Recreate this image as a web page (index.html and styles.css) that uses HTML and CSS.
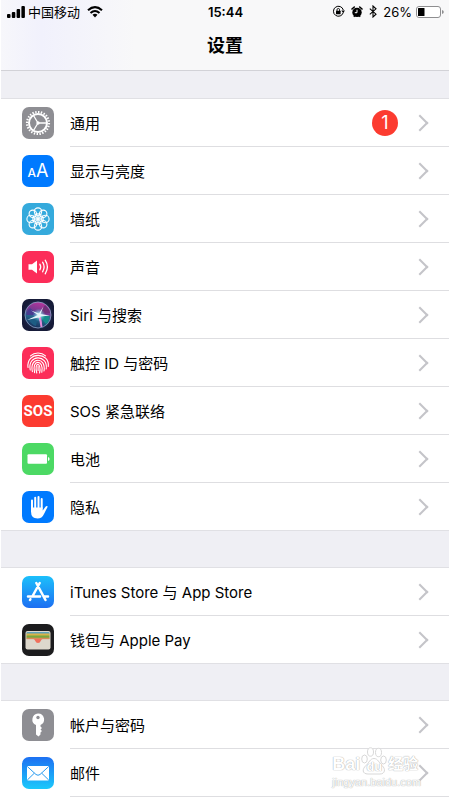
FILE: index.html
```html
<!DOCTYPE html>
<html lang="zh-CN">
<head>
  <meta charset="UTF-8">
  <meta name="viewport" content="width=device-width, initial-scale=1.0">
  <title>设置</title>
  <link rel="stylesheet" href="styles.css">
</head>
<body>
  <header class="top-bar">
    <!-- Status bar -->
    <div class="status-bar">
      <div class="status-left">
        <svg class="signal" width="18" height="12" viewBox="0 0 18 12">
          <rect x="0" y="8" width="3.500" height="4" rx="1"/>
          <rect x="4.800" y="6" width="3.500" height="6" rx="1"/>
          <rect x="9.600" y="3" width="3.500" height="9" rx="1"/>
          <rect x="14.400" y="0" width="3.500" height="12" rx="1"/>
        </svg>
        <span class="carrier">中国移动</span>
        <svg width="16" height="12" viewBox="0 0 16 12">
          <path d="M1 4.300Q8 -2 15 4.300M3.500 7Q8 3 12.500 7" fill="none" stroke="#000" stroke-width="2.100"/>
          <path d="M5.500 8.800Q8 6.800 10.500 8.800L8 11.500Z"/>
        </svg>
      </div>
      <span class="time">15:44</span>
      <div class="status-right">
        <svg width="13" height="13" viewBox="0 0 13 13">
          <path d="M11.300 7.500A5 5 0 1 1 11.300 5" fill="none" stroke="#000" stroke-width="1"/>
          <path d="M9.300 5.500h3.700l-1.800 2.600z"/>
          <rect x="4" y="5.700" width="4.600" height="3.500" rx=".5"/>
          <path d="M5 6V4.800a1.300 1.300 0 0 1 2.600 0V6" fill="none" stroke="#000" stroke-width=".9"/>
        </svg>
        <svg width="12" height="12" viewBox="0 0 12 12">
          <circle cx="6" cy="6.400" r="4.700"/>
          <path d="M1 3L3.300 1M8.700 1L11 3" stroke="#000" stroke-width="1.600" stroke-linecap="round"/>
          <path d="M2.800 10.800L4 9.500M9.200 10.800L8 9.500" stroke="#000" stroke-width="1.300"/>
          <path d="M6 3.700V6.700H3.800" fill="none" stroke="#fff" stroke-width="1"/>
        </svg>
        <svg width="8" height="13" viewBox="0 0 8 13">
          <path d="M.8 3.700L7 9.200L4 12V1L7 3.800L.8 9.300" fill="none" stroke="#000" stroke-width="1.100"/>
        </svg>
        <span class="percent">26%</span>
        <svg class="charge" width="28" height="12" viewBox="0 0 28 12">
          <rect x=".5" y=".5" width="24" height="11" rx="2.500" fill="#fff" stroke="#8e8e90"/>
          <rect x="2" y="2" width="6.500" height="8" rx=".5"/>
          <path d="M26 4q1.800 .5 1.800 2t-1.800 2z" fill="#8e8e90"/>
        </svg>
      </div>
    </div>
    <h1>设置</h1>
  </header>

  <main class="settings">
    <ul class="group">
      <li><a class="row" href="#general">
        <svg class="icon gray" viewBox="0 0 32 32">
          <g fill="none" stroke="#fff">
            <circle cx="16" cy="16" r="11" stroke-width="2.200" pathLength="48" stroke-dasharray="1 1"/>
            <circle cx="16" cy="16" r="9" stroke-width="2"/>
            <path d="M16 16H24.500M16 16L11.500 8.500M16 16L11.500 23.500" stroke-width="1.300"/>
          </g>
          <circle cx="16" cy="16" r="1.700" fill="#fff"/>
        </svg>
        <span class="cell"><span class="label">通用</span><span class="badge">1</span></span>
      </a></li>
      <li><a class="row" href="#display">
        <span class="icon blue letters"><small>A</small>A</span>
        <span class="cell"><span class="label">显示与亮度</span></span>
      </a></li>
      <li><a class="row" href="#wallpaper">
        <svg class="icon cyan" viewBox="0 0 32 32">
          <g fill="none" stroke="#fff" stroke-width="1.100">
            <circle cx="16" cy="8.600" r="3.700"/><circle cx="21.200" cy="10.800" r="3.700"/>
            <circle cx="23.400" cy="16" r="3.700"/><circle cx="21.200" cy="21.200" r="3.700"/>
            <circle cx="16" cy="23.400" r="3.700"/><circle cx="10.800" cy="21.200" r="3.700"/>
            <circle cx="8.600" cy="16" r="3.700"/><circle cx="10.800" cy="10.800" r="3.700"/>
          </g>
          <g fill="none" stroke="#fff" stroke-width=".8">
            <circle cx="16" cy="13" r="2.500"/><circle cx="18.100" cy="13.900" r="2.500"/>
            <circle cx="19" cy="16" r="2.500"/><circle cx="18.100" cy="18.100" r="2.500"/>
            <circle cx="16" cy="19" r="2.500"/><circle cx="13.900" cy="18.100" r="2.500"/>
            <circle cx="13" cy="16" r="2.500"/><circle cx="13.900" cy="13.900" r="2.500"/>
          </g>
        </svg>
        <span class="cell"><span class="label">墙纸</span></span>
      </a></li>
      <li><a class="row" href="#sounds">
        <svg class="icon pink" viewBox="0 0 32 32">
          <path d="M6.500 13.200H10L15 9.500V22.500L10 18.800H6.500Z" fill="#fff"/>
          <g fill="none" stroke="#fff" stroke-width="1.300" stroke-linecap="round">
            <path d="M17.800 13.200Q19.600 16 17.800 18.800M20.600 11.200Q23.600 16 20.600 20.800M23.200 9.200Q27.600 16 23.200 22.800"/>
          </g>
        </svg>
        <span class="cell"><span class="label">声音</span></span>
      </a></li>
      <li><a class="row" href="#siri">
        <svg class="icon" viewBox="0 0 32 32">
          <defs>
            <radialGradient id="siri-bg"><stop offset="0" stop-color="#344c87"/><stop offset="1" stop-color="#161b38"/></radialGradient>
            <linearGradient id="siri-orb" x1=".6" y1="0" x2=".3" y2="1"><stop offset="0" stop-color="#b9359c"/><stop offset=".4" stop-color="#6d3a8f"/><stop offset=".6" stop-color="#26688f"/><stop offset="1" stop-color="#172a56"/></linearGradient>
            <radialGradient id="siri-glow"><stop offset="0" stop-color="#fff"/><stop offset=".4" stop-color="#9de8ef" stop-opacity=".7"/><stop offset="1" stop-color="#4bb8dc" stop-opacity="0"/></radialGradient>
          </defs>
          <rect width="32" height="32" fill="url(#siri-bg)"/>
          <circle cx="16" cy="16" r="13" fill="url(#siri-orb)" stroke="#8fa5c8" stroke-width=".8"/>
          <path d="M16 16L8 9Q5 12 4 16Z" fill="#493b91"/>
          <path d="M16 16L28 17Q27 23 24 25Z" fill="#168b8b"/>
          <path d="M17 15L23 6Q28 11 28 14Z" fill="#703078"/>
          <path d="M16 16L7 21Q10 26 14 27Z" fill="#1d5c83"/>
          <circle cx="17" cy="16" r="6.500" fill="url(#siri-glow)"/>
          <path d="M16 16L9 11.500L17 14.500L21.500 7.500L18.500 15L28 16.500L18.500 17.500L20 28L16.500 18.500L5 21Z" fill="#e4f5fb"/>
          <path d="M17 19L18.500 28L20.500 28L19 18Z" fill="#e48bd8"/>
        </svg>
        <span class="cell"><span class="label">Siri 与搜索</span></span>
      </a></li>
      <li><a class="row" href="#touch-id">
        <svg class="icon pink" viewBox="0 0 32 32">
          <g fill="none" stroke="#fff" stroke-width="1.100" stroke-linecap="round">
            <path d="M8.500 8.800Q11.500 6 16 6T23.500 8.800"/>
            <path d="M6 20.500C4 4.500 28 4.500 26.300 19.500"/>
            <path d="M8.200 23C5 7 26.500 7 24.200 22"/>
            <path d="M10.400 24.600C7 9.500 24.500 9.500 22 24"/>
            <path d="M12.600 25.600C9 12 22.500 12 19.800 25.300"/>
            <path d="M14.800 26C11.500 14.500 20 14.500 17.600 26"/>
            <path d="M16.100 19.500V23.500"/>
          </g>
        </svg>
        <span class="cell"><span class="label">触控 ID 与密码</span></span>
      </a></li>
      <li><a class="row" href="#sos">
        <span class="icon red sos">SOS</span>
        <span class="cell"><span class="label">SOS 紧急联络</span></span>
      </a></li>
      <li><a class="row" href="#battery">
        <svg class="icon green" viewBox="0 0 32 32">
          <rect x="5.500" y="11.300" width="19.500" height="9.400" rx="1" fill="#fff"/>
          <path d="M26 14q1.600 .5 1.600 2t-1.600 2z" fill="#fff"/>
        </svg>
        <span class="cell"><span class="label">电池</span></span>
      </a></li>
      <li><a class="row" href="#privacy">
        <svg class="icon blue" viewBox="0 0 32 32">
          <g stroke="#fff" stroke-width="2" stroke-linecap="round" fill="none">
            <path d="M10 18V9.500M13.200 17V6.800M16.500 17V6M19.700 17V8"/>
          </g>
          <path d="M9 16.500H20.700V19.500L23.500 15.800Q24.400 14.600 25.800 15.400L22 23Q20 27.500 15.500 27.500Q9 27.500 9 20.500Z" fill="#fff"/>
        </svg>
        <span class="cell"><span class="label">隐私</span></span>
      </a></li>
    </ul>

    <ul class="group">
      <li><a class="row" href="#store">
        <svg class="icon store" viewBox="0 0 32 32">
          <g fill="none" stroke="#fff" stroke-width="2.500" stroke-linecap="round">
            <path d="M14.300 7L23.500 24M17.700 7L10.600 20M8.400 23.200L8 24M6 20.500H18M22.500 20.500H26"/>
          </g>
        </svg>
        <span class="cell"><span class="label">iTunes Store 与 App Store</span></span>
      </a></li>
      <li><a class="row" href="#wallet">
        <svg class="icon black" viewBox="0 0 32 32">
          <rect x="3.500" y="7" width="25" height="18.500" rx="2" fill="#ddd8cd"/>
          <rect x="4.500" y="8" width="23" height="3" rx="1" fill="#5fa0b8"/>
          <rect x="4.500" y="9.500" width="23" height="3" fill="#d9b34a"/>
          <rect x="4.500" y="11.500" width="23" height="3" fill="#79a83e"/>
          <rect x="4.500" y="13.700" width="23" height="2" fill="#d98a58"/>
          <path d="M4 15.300H28V24Q28 25 27 25H5Q4 25 4 24Z" fill="#ddd8cd"/>
          <path d="M11.500 15H20.500Q19.500 15.300 19 16.500Q18 19 16 19T13 16.500Q12.500 15.300 11.500 15Z" fill="#f0705c"/>
        </svg>
        <span class="cell"><span class="label">钱包与 Apple Pay</span></span>
      </a></li>
    </ul>

    <ul class="group">
      <li><a class="row" href="#accounts">
        <svg class="icon gray" viewBox="0 0 32 32">
          <path d="M16 4.500A6 6 0 0 1 18.500 16V17.500L20 19L18.500 20.500L20 22L18.500 23.500V25.500L16.500 27.500L14 25.500V16A6 6 0 0 1 16 4.500Z" fill="#fff"/>
          <circle cx="16" cy="8.500" r="1.700" fill="#8e8e93"/>
        </svg>
        <span class="cell"><span class="label">帐户与密码</span></span>
      </a></li>
      <li><a class="row" href="#mail">
        <svg class="icon mail" viewBox="0 0 32 32">
          <rect x="5" y="9" width="22" height="14.500" rx="1" fill="#fff"/>
          <path d="M5.300 9.500L14 17.500Q16 19 18 17.500L26.700 9.500M5.300 23L12.300 16.200M26.700 23L19.700 16.200" fill="none" stroke="#289bf0" stroke-width="1"/>
        </svg>
        <span class="cell"><span class="label">邮件</span></span>
      </a></li>
    </ul>
  </main>

  <!-- Watermark -->
  <div class="watermark">
    <div class="brand">
      <span>Bai</span>
      <span class="paw">
        <svg width="26" height="28" viewBox="0 0 26 28">
          <g fill="#fff" stroke="#d8d8d8" stroke-width="1">
            <ellipse cx="3.500" cy="12" rx="2.800" ry="4"/>
            <ellipse cx="9.500" cy="5" rx="3" ry="4.200"/>
            <ellipse cx="17.500" cy="5.500" rx="3" ry="4.200"/>
            <ellipse cx="22.500" cy="13" rx="2.800" ry="4"/>
            <path d="M13 11.500C17 11.500 18 16 21 18.500C25 22 24 27 19 27H7C1 27 1 22 5 18.500C8 16 9 11.500 13 11.500Z"/>
          </g>
        </svg>
        <span class="du">du</span>
      </span>
      <span class="cn">经验</span>
    </div>
    <div class="site">jingyan.baidu.com</div>
  </div>
</body>
</html>
```
FILE: styles.css
```css
* {
  box-sizing: border-box;
}
body {
  margin: 0;
  padding: 0 1px;
  min-height: 100vh;
  display: flex;
  flex-direction: column;
  background: #fff;
  color: #000;
  font-family: Inter, "Noto Sans CJK SC", sans-serif;
}

/* Top bar */
.top-bar {
  height: 71px;
  background: linear-gradient(90deg, #f7f7fb, #f1f1fc 9%, #f8f8f9 30%);
  border-bottom: 1px solid #d2d2d7;
}
.status-bar {
  display: grid;
  grid-template-columns: 1fr auto 1fr;
  align-items: center;
  height: 23px;
  padding: 0 5px 0 6px;
  font-size: 13px;
}
.status-left,
.status-right {
  display: flex;
  align-items: center;
}
.status-left {
  gap: 3px;
}
.status-left svg:last-child {
  margin-left: 4px;
}
.status-right {
  justify-content: flex-end;
  gap: 6px;
}
.charge {
  margin-left: -2px;
}
.time {
  font-weight: 600;
}
h1 {
  margin: 0;
  font-size: 18px;
  line-height: 46px;
  font-weight: 600;
  text-align: center;
}

/* Settings list */
.settings {
  flex: 1;
  display: flex;
  flex-direction: column;
  gap: 38px;
  padding-top: 28px;
  background: #efeff4;
}
.group {
  margin: 0;
  padding: 0;
  list-style: none;
  background: #fff;
  box-shadow: 0 1px #e0e0e4, 0 -1px #e0e0e4;
}
.group:last-child {
  flex: 1;
}
.row {
  display: flex;
  align-items: stretch;
  padding-left: 21px;
  color: inherit;
  text-decoration: none;
}
.cell {
  flex: 1;
  display: flex;
  align-items: center;
  height: 48px;
  margin-left: 16px;
  padding-right: 23px;
  border-bottom: 1px solid #dedee1;
  font-size: 15px;
}
.group:not(:last-child) li:last-child .cell {
  height: 47px;
  border-bottom: 0;
}
.label {
  flex: 1;
}
.cell::after {
  content: "";
  width: 10px;
  height: 10px;
  border: solid #c4c4c9;
  border-width: 2px 2px 0 0;
  transform: rotate(45deg);
}
.badge {
  width: 26px;
  height: 26px;
  margin-right: 16px;
  border-radius: 50%;
  background: #fc3b30;
  color: #fff;
  font-size: 18px;
  line-height: 26px;
  text-align: center;
}

/* Icons */
.icon {
  flex: none;
  width: 32px;
  height: 32px;
  margin-top: 8px;
  border-radius: 7px;
  overflow: hidden;
  color: #fff;
}
.gray { background: #8e8e93; }
.blue { background: #007aff; }
.cyan { background: #35aadc; }
.pink { background: #fc2d59; }
.red { background: #fc3b30; }
.green { background: #4cd964; }
.black { background: #1c1c1e; }
.store { background: linear-gradient(#1cc0fb, #1d6ff2); }
.mail { background: linear-gradient(#1d70f2, #1bc9fb); }
.letters {
  display: flex;
  align-items: baseline;
  justify-content: center;
  font-size: 18px;
  line-height: 31px;
}
.letters small {
  font-size: 12px;
  font-weight: 500;
}
.sos {
  font-family: Roboto, sans-serif;
  font-size: 15px;
  font-weight: 700;
  line-height: 32px;
  text-align: center;
}

/* Watermark */
.watermark {
  position: absolute;
  top: 745px;
  right: 29px;
  color: #fff;
  font-family: "Liberation Sans", "Noto Sans CJK SC", sans-serif;
  font-weight: 700;
  text-shadow: 0 0 1px #aaa, 0 0 1px #bbb;
  pointer-events: none;
}
.brand {
  display: flex;
  align-items: flex-end;
  height: 30px;
  font-size: 18px;
  line-height: 22px;
}
.paw {
  display: grid;
  margin: 0 1px;
}
.paw > * {
  grid-area: 1 / 1;
}
.du {
  align-self: end;
  font-size: 13px;
  line-height: 16px;
  text-align: center;
}
.cn {
  font-size: 15px;
}
.site {
  font-size: 11px;
  font-weight: 400;
  line-height: 14px;
}
```
